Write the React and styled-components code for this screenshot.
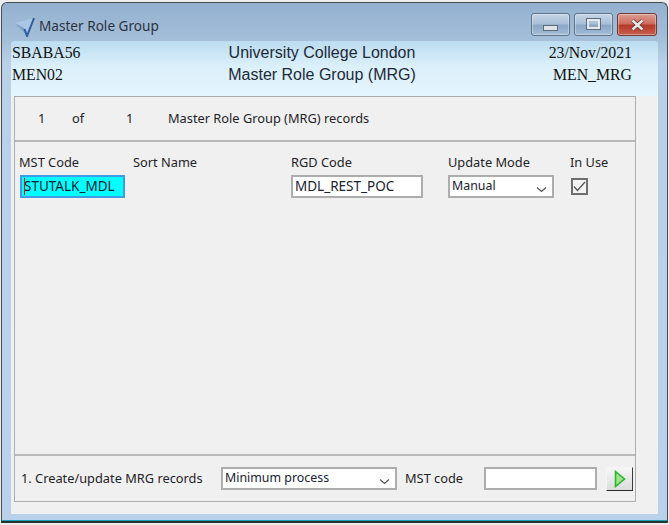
import React from 'react';
import styled, { createGlobalStyle } from 'styled-components';

const GlobalStyle = createGlobalStyle`
  html, body {
    margin: 0;
    padding: 0;
    background: #ececec;
  }
  #root {
    width: 669px;
    height: 525px;
    overflow: hidden;
  }
`;

const Window = styled.div`
  box-sizing: border-box;
  width: 667px;
  height: 521px;
  margin: 2px 0 0 1px;
  display: flex;
  flex-direction: column;
  padding: 0 9px 7px 9px;
  border: 1px solid #4a4d50;
  border-bottom: 2px solid #2a3236;
  border-radius: 6px 6px 0 0;
  background: linear-gradient(180deg, #93b1cf 0, #a5bfd9 38px, #b8d0e8 60px, #b9d1ea 100%);
  box-shadow: inset 0 -1px 0 #17a3b4;
  font-family: "Noto Sans", "Open Sans", sans-serif;
`;

const TitleBar = styled.div`
  height: 38px;
  flex: none;
  display: flex;
  align-items: center;
  font-size: 13.6px;
  color: #1d2430;
`;

const TitleText = styled.span`
  margin-left: 3px;
  padding-top: 7px;
  opacity: 0.9;
`;

const TitleIcon = styled.svg`
  width: 22px;
  height: 20px;
  margin-left: 3px;
  margin-top: 9px;
`;

const Controls = styled.div`
  display: flex;
  gap: 4px;
  margin-left: auto;
  margin-top: 5px;
  margin-right: 1px;
`;

const ControlButton = styled.div`
  box-sizing: border-box;
  width: ${(p) => (p.$close ? '40px' : '39px')};
  height: 23px;
  display: flex;
  align-items: center;
  justify-content: center;
  border: 1px solid ${(p) => (p.$close ? '#6f3a3a' : '#5f7286')};
  border-radius: 3px;
  background: ${(p) =>
    p.$close
      ? 'linear-gradient(180deg, #dc9c90 0, #cf6f60 45%, #b53a2a 55%, #c9604e 100%)'
      : 'linear-gradient(180deg, #c6d6e6 0, #a9c0d8 45%, #8ba7c4 55%, #a3bdd8 100%)'};
  box-shadow: inset 0 0 0 1px rgba(255, 255, 255, 0.35);
`;

const MinGlyph = styled.span`
  box-sizing: border-box;
  width: 15px;
  height: 6px;
  margin-top: 7px;
  background: #dfe3e8;
  border: 1px solid #5d6b7b;
`;

const MaxGlyph = styled.span`
  box-sizing: border-box;
  width: 13px;
  height: 10px;
  margin-top: -2px;
  background: transparent;
  border: 2px solid #e4e8ed;
  outline: 1px solid #5d6b7b;
`;

const Content = styled.div`
  flex: 1;
  min-height: 0;
  display: flex;
  flex-direction: column;
  background:
    linear-gradient(180deg, #bcdcf0 0, #dbf0fb 26px, #e4f5fd 55px, #f0f0f0 55px);
  border-radius: 3px 3px 0 0;
  padding: 0 22px 12px 3px;
`;

const Header = styled.div`
  box-sizing: border-box;
  height: 55px;
  flex: none;
  display: grid;
  grid-template-columns: 1fr auto 1fr;
  grid-template-rows: 22px 22px;
  padding-top: 1px;
  margin-left: -2px;
  margin-right: 4px;
  align-items: center;
`;

const SerifCell = styled.div`
  font-family: "Liberation Serif", serif;
  font-size: 15.8px;
  color: #111;
  text-align: ${(p) => p.$align || 'left'};
`;

const CenterCell = styled.div`
  font-family: "Liberation Sans", sans-serif;
  font-size: 16px;
  color: #1e2a38;
  text-align: center;
`;

const Panel = styled.div`
  flex: 1;
  min-height: 0;
  display: flex;
  flex-direction: column;
  border: 1px solid #adadad;
  background: #f0f0f0;
  font-size: 12.8px;
  color: #1f2328;
`;

const Summary = styled.div`
  height: 45px;
  flex: none;
  display: flex;
  align-items: center;
  padding-bottom: 2px;
  border-bottom: 2px solid #b9b9b9;
  box-sizing: border-box;
`;

const SummaryCell = styled.span`
  width: ${(p) => p.$width}px;
  flex: none;
`;

const Records = styled.div`
  flex: 1;
  display: flex;
  padding: 11px 0 0 4px;
  border-bottom: 2px solid #b9b9b9;
`;

const Column = styled.div`
  width: ${(p) => p.$width}px;
  flex: none;
  display: flex;
  flex-direction: column;
  gap: 4px;
`;

const Label = styled.label`
  height: 18px;
  line-height: 18px;
`;

const TextField = styled.input`
  box-sizing: border-box;
  display: block;
  width: ${(p) => p.$width}px;
  height: 23px;
  margin: 0;
  padding: 0 2px 1px;
  border: 2px solid #adadad;
  outline: none;
  background: #fff;
  color: #1a2230;
  font-family: "Noto Sans", "Open Sans", sans-serif;
  font-size: 13.5px;
`;

const FieldWrap = styled.div`
  position: relative;
  margin-left: 1px;
  width: 105px;
`;

const ActiveField = styled(TextField)`
  background: #00ffff;
  border-color: #3c9ce6;
`;

const Caret = styled.span`
  position: absolute;
  left: 4px;
  top: 3px;
  width: 1px;
  height: 17px;
  background: #e01515;
`;

const Select = styled.div`
  box-sizing: border-box;
  width: ${(p) => p.$width}px;
  height: 23px;
  padding: 0 5px 2px 2px;
  display: flex;
  align-items: center;
  justify-content: space-between;
  border: 2px solid #adadad;
  background: #fff;
  color: #1a2230;
  font-size: 12.4px;
`;

const SelectArrow = styled.svg`
  width: 11px;
  height: 7px;
  margin-top: 8px;
  flex: none;
`;

const CheckBox = styled.div`
  box-sizing: border-box;
  width: 17px;
  height: 17px;
  margin: 3px 0 0 1px;
  border: 2px solid #6f6f6f;
  background: #f4f4f4;
  display: flex;
  align-items: center;
  justify-content: center;
`;

const Footer = styled.div`
  height: 45px;
  flex: none;
  box-sizing: border-box;
  display: flex;
  align-items: center;
  padding-left: 6px;
`;

const FooterLabel = styled.span`
  box-sizing: border-box;
  width: ${(p) => p.$width}px;
  padding-left: ${(p) => p.$indent || 0}px;
  padding-bottom: 2px;
  flex: none;
`;

const RunButton = styled.div`
  box-sizing: border-box;
  width: 27px;
  height: 24px;
  margin-left: 9px;
  display: flex;
  align-items: center;
  justify-content: center;
  background: linear-gradient(180deg, #f6f6f6, #dcdcdc);
  border: 1px solid #f4f4f4;
  border-right-color: #3a3a3a;
  border-bottom-color: #2a2a2a;
`;

function Chevron() {
  return (
    <SelectArrow viewBox="0 0 11 7">
      <path d="M1 1.5 L5.5 5.5 L10 1.5" fill="none" stroke="#555" strokeWidth="1.2" />
    </SelectArrow>
  );
}

function App() {
  return (
    <>
      <GlobalStyle />
      <Window>
        <TitleBar>
          <TitleIcon viewBox="0 0 22 20">
            <path d="M1 6 L20 1 L13 19 Z" fill="#a9c7e4" />
            <path d="M1 6 L13 19 L10 11 Z" fill="#7fa2c6" />
            <path d="M20 1 L13 19 L10.5 12" fill="none" stroke="#2f5f9a" strokeWidth="2" />
          </TitleIcon>
          <TitleText>Master Role Group</TitleText>
          <Controls>
            <ControlButton><MinGlyph /></ControlButton>
            <ControlButton><MaxGlyph /></ControlButton>
            <ControlButton $close>
              <svg width="15" height="12" viewBox="0 0 15 12">
                <path d="M2.5 1.5 L12.5 10.5 M12.5 1.5 L2.5 10.5" stroke="#5e2a2a" strokeWidth="4" />
                <path d="M2.5 1.5 L12.5 10.5 M12.5 1.5 L2.5 10.5" stroke="#e6e6e6" strokeWidth="2.6" />
              </svg>
            </ControlButton>
          </Controls>
        </TitleBar>
        <Content>
          <Header>
            <SerifCell>SBABA56</SerifCell>
            <CenterCell>University College London</CenterCell>
            <SerifCell $align="right">23/Nov/2021</SerifCell>
            <SerifCell>MEN02</SerifCell>
            <CenterCell>Master Role Group (MRG)</CenterCell>
            <SerifCell $align="right">MEN_MRG</SerifCell>
          </Header>
          <Panel>
            <Summary>
              <SummaryCell $width={23} />
              <SummaryCell $width={34}>1</SummaryCell>
              <SummaryCell $width={54}>of</SummaryCell>
              <SummaryCell $width={42}>1</SummaryCell>
              <span>Master Role Group (MRG) records</span>
            </Summary>
            <Records>
              <Column $width={114}>
                <Label>MST Code</Label>
                <FieldWrap>
                  <ActiveField $width={105} value="STUTALK_MDL" readOnly />
                  <Caret />
                </FieldWrap>
              </Column>
              <Column $width={158}>
                <Label>Sort Name</Label>
              </Column>
              <Column $width={157}>
                <Label>RGD Code</Label>
                <TextField $width={132} value="MDL_REST_POC" readOnly />
              </Column>
              <Column $width={122}>
                <Label>Update Mode</Label>
                <Select $width={106}>
                  Manual
                  <Chevron />
                </Select>
              </Column>
              <Column $width={50}>
                <Label>In Use</Label>
                <CheckBox>
                  <svg width="13" height="11" viewBox="0 0 13 11">
                    <path d="M1 5.5 L4.5 9.5 L12 1" fill="none" stroke="#555" strokeWidth="1.3" />
                  </svg>
                </CheckBox>
              </Column>
            </Records>
            <Footer>
              <FooterLabel $width={200}>1. Create/update MRG records</FooterLabel>
              <Select $width={176}>
                Minimum process
                <Chevron />
              </Select>
              <FooterLabel $width={87} $indent={8}>MST code</FooterLabel>
              <TextField $width={113} value="" readOnly />
              <RunButton>
                <svg width="12" height="18" viewBox="0 0 12 18">
                  <path d="M1.5 1.5 L10.5 9 L1.5 16.5 Z" fill="#9ee28c" stroke="#2fb52f" strokeWidth="1.6" />
                </svg>
              </RunButton>
            </Footer>
          </Panel>
        </Content>
      </Window>
    </>
  );
}

export default App;
